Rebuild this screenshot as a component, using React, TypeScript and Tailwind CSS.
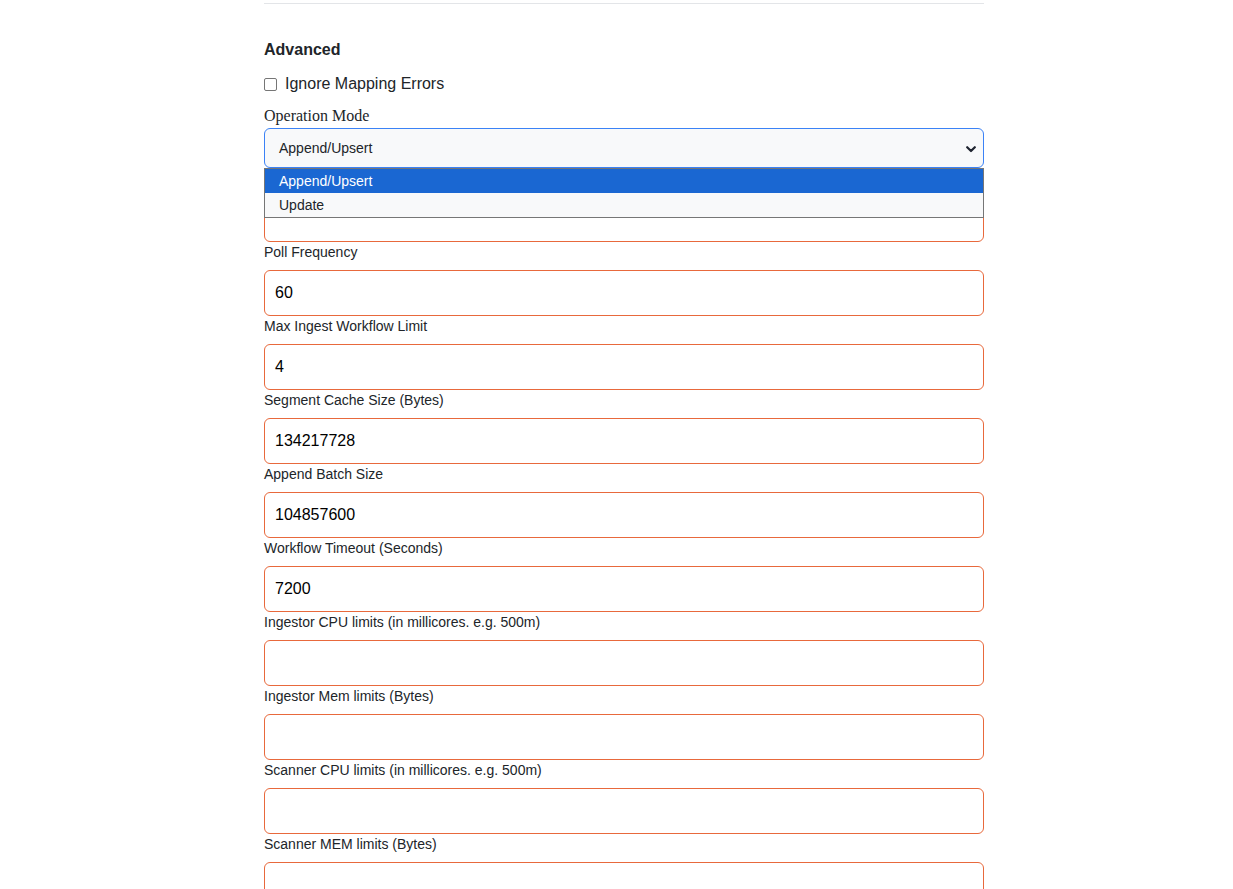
import React from "react";

const sans = { fontFamily: '"Liberation Sans", Arial, sans-serif' };

type Field = { label: string; value: string };

const fields: Field[] = [
  { label: "", value: "" },
  { label: "Poll Frequency", value: "60" },
  { label: "Max Ingest Workflow Limit", value: "4" },
  { label: "Segment Cache Size (Bytes)", value: "134217728" },
  { label: "Append Batch Size", value: "104857600" },
  { label: "Workflow Timeout (Seconds)", value: "7200" },
  { label: "Ingestor CPU limits (in millicores. e.g. 500m)", value: "" },
  { label: "Ingestor Mem limits (Bytes)", value: "" },
  { label: "Scanner CPU limits (in millicores. e.g. 500m)", value: "" },
  { label: "Scanner MEM limits (Bytes)", value: "" },
];

function Chevron() {
  return (
    <svg width="10" height="7" viewBox="0 0 10 7" className="absolute right-[3px] top-[17px]">
      <path d="M1.2 1.2 L5 5 L8.8 1.2" fill="none" stroke="#1f2430" strokeWidth="2.2" strokeLinecap="round" strokeLinejoin="round" />
    </svg>
  );
}

export default function App() {
  return (
    <div className="min-h-[889px] bg-white text-[#212529]" style={sans}>
      <div className="ml-[264px] w-[720px] pt-[3px]">
        <div className="h-px bg-[#e3e5e8]" />
        <div className="mt-[34px] text-base font-bold leading-6">Advanced</div>
        <label className="mt-[10px] flex items-center gap-2 text-base leading-6">
          <span className="block h-[13px] w-[13px] rounded-[2px] border border-[#767676] bg-white" />
          <span>Ignore Mapping Errors</span>
        </label>
        <div
          className="mt-2 text-base leading-6"
          style={{ fontFamily: '"Liberation Serif", "Times New Roman", serif' }}
        >
          Operation Mode
        </div>
        <div className="relative">
          <div className="relative flex h-10 items-center rounded-[6px] border border-[#3b82f6] bg-[#f8f9fa] pl-[14px] pr-3 text-sm">
            <span>Append/Upsert</span>
            <div className="absolute right-[4px] top-0 h-full w-[14px]">
              <Chevron />
            </div>
          </div>
          {/* open option list */}
          <div className="absolute left-0 top-full z-10 w-full border border-[#767676] bg-[#f8f9fa] text-sm">
            <div className="flex h-6 items-center bg-[#1a67d2] pl-[14px] text-white">Append/Upsert</div>
            <div className="flex h-6 items-center pl-[14px]">Update</div>
          </div>
        </div>
        {fields.map((f, i) => (
          <div key={i}>
            <div className="mb-2 h-5 text-sm leading-5">{f.label}</div>
            <div className="flex h-[46px] items-center rounded-[6px] border border-[#e8693c] bg-white px-[10px] text-base text-black">
              {f.value}
            </div>
          </div>
        ))}
      </div>
    </div>
  );
}
